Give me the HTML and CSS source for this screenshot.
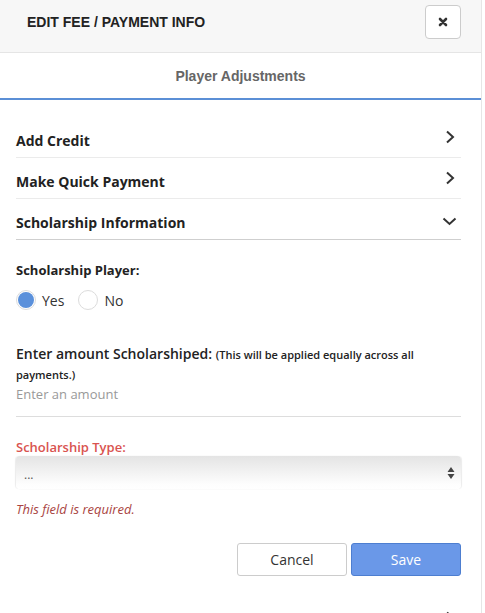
FILE: index.html
```html
<!DOCTYPE html>
<html>
<head>
<meta charset="utf-8">
<link rel="stylesheet" href="styles.css">
</head>
<body>
<div class="modal">
  <div class="modal-header">
    <h4 class="modal-title">EDIT FEE / PAYMENT INFO</h4>
    <button class="close-btn" aria-label="Close">
      <svg width="10" height="10" viewBox="0 0 10 10"><path d="M2 2 L8 8 M8 2 L2 8" stroke="#333" stroke-width="2.6" stroke-linecap="round"/></svg>
    </button>
  </div>
  <div class="tabs">
    <div class="tab active">Player Adjustments</div>
  </div>
  <div class="modal-body">
    <div class="acc-row">
      <span class="acc-title">Add Credit</span>
      <svg class="chev" width="10" height="14" viewBox="0 0 10 14"><path d="M2 1.5 L8 7 L2 12.5" fill="none" stroke="#333" stroke-width="2"/></svg>
    </div>
    <div class="acc-row">
      <span class="acc-title">Make Quick Payment</span>
      <svg class="chev" width="10" height="14" viewBox="0 0 10 14"><path d="M2 1.5 L8 7 L2 12.5" fill="none" stroke="#333" stroke-width="2"/></svg>
    </div>
    <div class="acc-row open">
      <span class="acc-title">Scholarship Information</span>
      <svg class="chev down" width="15" height="9" viewBox="0 0 15 9"><path d="M1.5 1.5 L7.5 7 L13.5 1.5" fill="none" stroke="#333" stroke-width="2"/></svg>
    </div>

    <div class="section">
      <div class="field-label">Scholarship Player:</div>
      <div class="radios">
        <label class="radio"><span class="dot checked"></span><span>Yes</span></label>
        <label class="radio"><span class="dot"></span><span>No</span></label>
      </div>

      <div class="amount">
        <div class="amount-label">Enter amount Scholarshiped: <small>(This will be applied equally across all payments.)</small></div>
        <div class="amount-input">Enter an amount</div>
      </div>

      <div class="type">
        <div class="type-label">Scholarship Type:</div>
        <div class="select">
          <span>...</span>
          <svg width="8" height="14" viewBox="0 0 8 14"><path d="M4 1 L7.5 6 L0.5 6 Z M4 13 L7.5 8 L0.5 8 Z" fill="#444"/></svg>
        </div>
        <div class="error">This field is required.</div>
      </div>

      <div class="actions">
        <button class="btn cancel">Cancel</button>
        <button class="btn save">Save</button>
      </div>
    </div>

    <div class="acc-row last">
      <span class="acc-title"></span>
      <svg class="chev" width="10" height="14" viewBox="0 0 10 14"><path d="M2 1.5 L8 7 L2 12.5" fill="none" stroke="#333" stroke-width="2"/></svg>
    </div>
  </div>
</div>
</body>
</html>
```
FILE: styles.css
```css
html, body {
  margin: 0;
  padding: 0;
  background: #fff;
  overflow: hidden;
}
body {
  font-family: "Open Sans", "Liberation Sans", sans-serif;
  color: #333;
}
.modal {
  width: 481px;
  border-right: 1px solid #e6e6e6;
  min-height: 613px;
  box-sizing: content-box;
}
.modal-header {
  background: #f7f7f7;
  height: 52px;
  border-bottom: 1px solid #e5e5e5;
  display: flex;
  align-items: flex-start;
  justify-content: space-between;
  padding: 0 20px 0 27px;
  box-sizing: content-box;
}
.modal-title {
  margin: 0;
  padding-top: 14px;
  font-family: "Liberation Sans", Arial, sans-serif;
  font-weight: bold;
  font-size: 14px;
  line-height: 17px;
  color: #222;
}
.close-btn {
  margin-top: 5px;
  width: 36px;
  height: 34px;
  background: #fff;
  border: 1px solid #ccc;
  border-radius: 4px;
  display: flex;
  align-items: center;
  justify-content: center;
  padding: 0;
}
.tabs {
  border-bottom: 2px solid #5b8fd6;
  display: flex;
  justify-content: center;
  height: 45px;
}
.tab {
  font-family: "Liberation Sans", Arial, sans-serif;
  font-weight: bold;
  font-size: 14px;
  color: #666;
  padding-top: 15px;
  line-height: 17px;
}
.modal-body {
  padding: 17px 20px 0 16px;
}
.acc-row {
  height: 41px;
  box-sizing: border-box;
  border-bottom: 1px solid #ebebeb;
  display: flex;
  align-items: center;
  justify-content: space-between;
  padding: 7px 6px 0 0;
}
.acc-row.open {
  border-bottom-color: #cfcfcf;
}
.acc-title {
  font-weight: 700;
  font-size: 14px;
  color: #222;
  line-height: 20px;
}
.chev { display: block; margin-top: -7px; }
.chev.down { margin-top: -2px; margin-right: -2px; }
.section {
  padding-top: 20px;
}
.field-label {
  font-weight: 700;
  font-size: 13px;
  line-height: 20px;
  color: #222;
}
.radios {
  display: flex;
  gap: 14px;
  margin-top: 10px;
  height: 20px;
  align-items: center;
}
.radio {
  display: flex;
  align-items: center;
  gap: 6px;
  font-size: 14px;
  color: #333;
}
.dot {
  width: 20px;
  height: 20px;
  border: 1px solid #dcdcdc;
  border-radius: 50%;
  box-sizing: border-box;
  background: #fff;
  position: relative;
}
.dot.checked::after {
  content: "";
  position: absolute;
  left: 1px; top: 1px; right: 1px; bottom: 1px;
  border-radius: 50%;
  background: #5a90db;
}
.amount {
  margin-top: 34px;
}
.amount-label {
  font-weight: 600;
  font-size: 14px;
  line-height: 19px;
  color: #222;
}
.amount-label small {
  font-size: 11px;
  font-weight: 600;
  line-height: 19px;
}
.amount-input {
  font-size: 13px;
  color: #999;
  line-height: 20px;
  padding-bottom: 12px;
  border-bottom: 1px solid #ddd;
}
.type {
  margin-top: 20px;
}
.type-label {
  font-size: 13px;
  font-weight: 600;
  color: #d9534f;
  line-height: 20px;
}
.select {
  margin-top: -1px;
  height: 33px;
  border-radius: 4px;
  background: linear-gradient(#e4e4e4, #fdfdfd 85%, #fff);
  box-shadow: -1px 0 1px rgba(0,0,0,0.08), 1px 0 1px rgba(0,0,0,0.08);
  display: flex;
  align-items: center;
  justify-content: space-between;
  padding: 0 6px 0 8px;
  font-size: 12px;
  color: #555;
}
.select span { padding-top: 4px; }
.error {
  font-style: italic;
  font-size: 13px;
  color: #a94442;
  line-height: 20px;
  margin-top: 10px;
}
.actions {
  display: flex;
  justify-content: flex-end;
  gap: 4px;
  margin-top: 24px;
}
.btn {
  width: 110px;
  height: 33px;
  border-radius: 3px;
  font-family: "Open Sans", sans-serif;
  font-size: 14px;
  padding: 0;
}
.cancel {
  background: #fff;
  border: 1px solid #ccc;
  color: #333;
}
.save {
  background: #6a98e8;
  border: 1px solid #4d7ed0;
  color: #fff;
}
.acc-row.last {
  margin-top: 21px;
  border-bottom: none;
}
```
